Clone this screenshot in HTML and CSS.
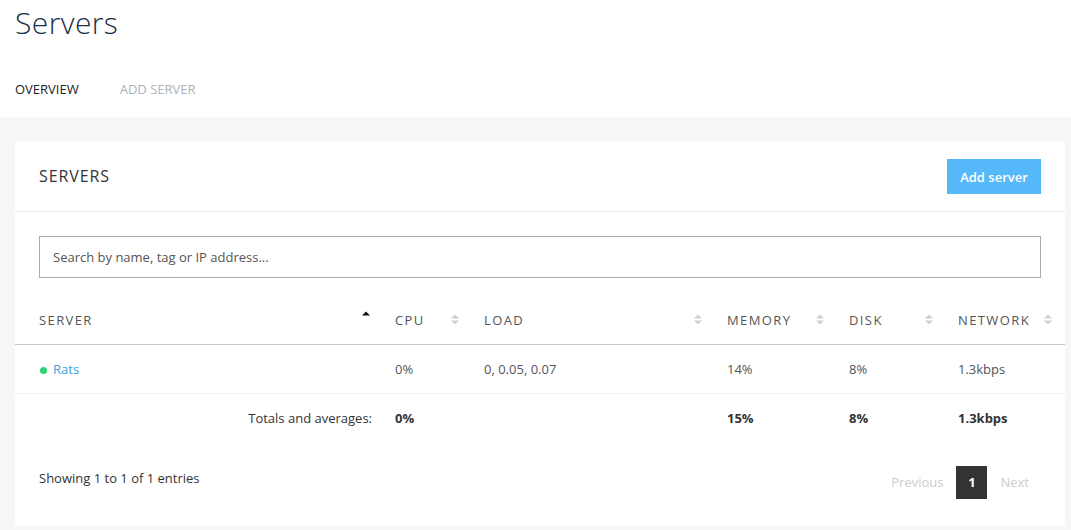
FILE: index.html
```html
<!DOCTYPE html>
<html lang="en">
<head>
    <meta charset="UTF-8">
    <meta name="viewport" content="width=device-width, initial-scale=1.0">
    <title>Servers</title>
    <link rel="stylesheet" href="styles.css">
</head>
<body>
    <div class="page-header">
        <h1>Servers</h1>
        <div class="tabs">
            <a class="tab active">OVERVIEW</a>
            <a class="tab">ADD SERVER</a>
        </div>
    </div>

    <div class="content">
        <div class="card">
            <div class="card-header">
                <h2>SERVERS</h2>
                <button class="btn-add">Add server</button>
            </div>

            <div class="card-body">
                <input class="search" type="text" placeholder="Search by name, tag or IP address...">

                <table class="servers">
                    <colgroup>
                        <col class="c-server">
                        <col class="c-cpu">
                        <col class="c-load">
                        <col class="c-mem">
                        <col class="c-disk">
                        <col class="c-net">
                    </colgroup>
                    <thead>
                        <tr>
                            <th>SERVER <span class="sort asc"><svg width="8" height="11" viewBox="0 0 8 11"><path d="M0 4.5 L4 0.5 L8 4.5 Z" fill="#111"/></svg></span></th>
                            <th>CPU <span class="sort"><svg width="8" height="11" viewBox="0 0 8 11"><path d="M0 4.5 L4 0.5 L8 4.5 Z M0 6.5 L4 10.5 L8 6.5 Z" fill="#d0d0d0"/></svg></span></th>
                            <th>LOAD <span class="sort"><svg width="8" height="11" viewBox="0 0 8 11"><path d="M0 4.5 L4 0.5 L8 4.5 Z M0 6.5 L4 10.5 L8 6.5 Z" fill="#d0d0d0"/></svg></span></th>
                            <th>MEMORY <span class="sort"><svg width="8" height="11" viewBox="0 0 8 11"><path d="M0 4.5 L4 0.5 L8 4.5 Z M0 6.5 L4 10.5 L8 6.5 Z" fill="#d0d0d0"/></svg></span></th>
                            <th>DISK <span class="sort"><svg width="8" height="11" viewBox="0 0 8 11"><path d="M0 4.5 L4 0.5 L8 4.5 Z M0 6.5 L4 10.5 L8 6.5 Z" fill="#d0d0d0"/></svg></span></th>
                            <th>NETWORK <span class="sort"><svg width="8" height="11" viewBox="0 0 8 11"><path d="M0 4.5 L4 0.5 L8 4.5 Z M0 6.5 L4 10.5 L8 6.5 Z" fill="#d0d0d0"/></svg></span></th>
                        </tr>
                    </thead>
                    <tbody>
                        <tr>
                            <td><span class="status online"></span><a class="server-link">Rats</a></td>
                            <td>0%</td>
                            <td>0, 0.05, 0.07</td>
                            <td>14%</td>
                            <td>8%</td>
                            <td>1.3kbps</td>
                        </tr>
                    </tbody>
                    <tfoot>
                        <tr>
                            <td class="totals-label">Totals and averages:</td>
                            <td>0%</td>
                            <td></td>
                            <td>15%</td>
                            <td>8%</td>
                            <td>1.3kbps</td>
                        </tr>
                    </tfoot>
                </table>

                <div class="table-footer">
                    <div class="info">Showing 1 to 1 of 1 entries</div>
                    <div class="pagination">
                        <a class="page disabled">Previous</a>
                        <a class="page current">1</a>
                        <a class="page disabled">Next</a>
                    </div>
                </div>
            </div>
        </div>
    </div>
</body>
</html>
```

FILE: styles.css
```css
body {
    margin: 0;
    font-family: "Open Sans", "Noto Sans", Arial, sans-serif;
    font-size: 13px;
    color: #555;
    background-color: #f7f7f7;
}
.page-header {
    background-color: white;
    padding: 0 15px;
    height: 117px;
    box-sizing: border-box;
}
h1 {
    margin: 0;
    padding-top: 3px;
    font-size: 30px;
    font-weight: 300;
    letter-spacing: 0.4px;
    line-height: 40px;
    color: #182f45;
}
.tabs {
    display: flex;
    gap: 41px;
    margin-top: 35px;
}
.tab {
    font-size: 13px;
    color: #aab3bc;
    line-height: 22px;
}
.tab.active {
    color: #222;
}
.content {
    padding: 24px 6px 0 15px;
}
.card {
    background-color: white;
    padding-bottom: 27px;
}
.card-header {
    display: flex;
    justify-content: space-between;
    align-items: center;
    height: 70px;
    padding: 0 24px;
    border-bottom: 1px solid #ececec;
}
.card-header h2 {
    margin: 0;
    font-size: 16px;
    font-weight: 400;
    letter-spacing: 0.9px;
    color: #333;
}
.btn-add {
    background-color: #55b8f8;
    color: white;
    border: none;
    width: 94px;
    height: 35px;
    font-family: inherit;
    font-size: 13px;
    font-weight: 600;
    padding: 0;
    margin-top: 1px;
}
.card-body {
    padding-top: 24px;
}
.search {
    display: block;
    box-sizing: border-box;
    width: calc(100% - 48px);
    margin: 0 24px;
    height: 42px;
    padding: 0 13px;
    border: 1px solid #aaa;
    font-family: inherit;
    font-size: 13px;
    color: #555;
}
.search::placeholder {
    color: #555;
}
.servers {
    width: 100%;
    border-collapse: collapse;
    table-layout: fixed;
    margin-top: 18px;
}
.c-server { width: 368px; }
.c-cpu { width: 89px; }
.c-load { width: 243px; }
.c-mem { width: 122px; }
.c-disk { width: 109px; }
.c-net { width: 119px; }
th, td {
    padding: 0 12px;
    height: 48px;
    text-align: left;
}
th:first-child, td:first-child {
    padding-left: 24px;
}
th {
    position: relative;
    font-size: 13px;
    font-weight: 400;
    letter-spacing: 1.4px;
    color: #555;
    border-bottom: 1px solid #c8c8c8;
}
.sort {
    position: absolute;
    right: 13px;
    top: 18px;
    line-height: 0;
}
.sort.asc {
    top: 15px;
}
tbody td {
    border-bottom: 1px solid #efefef;
}
tfoot td {
    font-weight: 700;
    color: #333;
}
tfoot .totals-label {
    text-align: right;
    font-weight: 400;
    padding-right: 11px;
}
.status {
    display: inline-block;
    width: 7px;
    height: 7px;
    border-radius: 50%;
    margin: 0 6px 1px 1px;
    vertical-align: middle;
}
.status.online {
    background-color: #2ed573;
}
.server-link {
    color: #3aa3db;
}
.table-footer {
    display: flex;
    justify-content: space-between;
    align-items: flex-start;
    padding: 0 24px;
    margin-top: 24px;
}
.info {
    color: #333;
    line-height: 24px;
}
.pagination {
    display: flex;
    align-items: center;
}
.page {
    padding: 0 12px;
    line-height: 33px;
    color: #ccc;
}
.page.current {
    background-color: #333;
    color: white;
    font-weight: 700;
    width: 31px;
    padding: 0;
    text-align: center;
    margin: 0 1px;
}
```
